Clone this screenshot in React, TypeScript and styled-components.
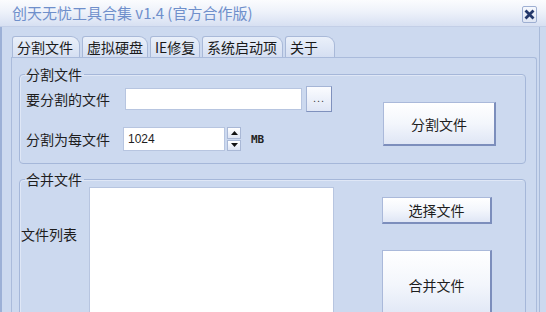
import styled, { createGlobalStyle } from "styled-components";

const GlobalStyle = createGlobalStyle`
  html, body {
    margin: 0;
    padding: 0;
    background: #ccd9ef;
    overflow: hidden;
  }
  * {
    box-sizing: border-box;
  }
`;

const cjk = `"Noto Sans CJK SC", "Noto Sans", sans-serif`;

const Window = styled.div`
  width: 546px;
  height: 312px;
  overflow: hidden;
  background: #ccd9ef;
  font-family: ${cjk};
  color: #1e1e1e;
`;

const TitleBar = styled.div`
  height: 27px;
  display: flex;
  align-items: center;
  justify-content: space-between;
  padding: 0 9px 0 12px;
  background: linear-gradient(#fbfcfe 0%, #eef2fa 45%, #d7e0f2 100%);
  border-bottom: 1px solid #c3cfe7;
`;

const Title = styled.div`
  font-size: 15px;
  line-height: 20px;
  color: #6f8fcb;
`;

const CloseButton = styled.div`
  width: 15px;
  height: 17px;
  margin-top: 2px;
  border: 1px solid #9eafd2;
  border-radius: 2px;
  background: linear-gradient(#f6f8fd, #dfe6f4);
  display: flex;
  align-items: center;
  justify-content: center;
`;

const Frame = styled.div`
  width: 540px;
  height: 285px;
  border-left: 2px solid #9cb0d6;
  border-right: 1px solid #a8bad9;
  padding: 9px 2px 0 9px;
  display: flex;
  flex-direction: column;
`;

const TabStrip = styled.div`
  display: flex;
  gap: 2px;
  height: 21px;
  padding-left: 1px;
`;

const Tab = styled.div<{ $w: number }>`
  width: ${(p) => p.$w}px;
  height: 21px;
  border: 1px solid #a9b9d8;
  border-bottom: none;
  border-radius: 3px 9px 0 0;
  background: linear-gradient(#eaf0fa, #d5dff2);
  font-size: 14px;
  line-height: 20px;
  padding-left: 4px;
  white-space: nowrap;
  color: #1a1a1a;
`;

const TabPanel = styled.div`
  flex: 1;
  border: 1px solid #aabbdb;
  border-bottom: none;
  border-radius: 0 3px 0 0;
  padding: 8px 10px 0 7px;
  display: flex;
  flex-direction: column;
  gap: 7px;
`;

const Group = styled.fieldset<{ $h: number }>`
  margin: 0;
  padding: 0;
  height: ${(p) => p.$h}px;
  flex-shrink: 0;
  border: 1px solid #a5b7d9;
  border-radius: 4px;
  box-shadow: inset 1px 1px 0 #dfe7f6;
  min-width: 0;
`;

const Legend = styled.legend`
  margin-left: 5px;
  padding: 0 2px 0 1px;
  font-size: 14px;
  line-height: 16px;
  color: #1e1e1e;
`;

const SplitBody = styled.div`
  display: flex;
  padding: 4px 0 0 6px;
`;

const Rows = styled.div`
  display: flex;
  flex-direction: column;
  gap: 14px;
`;

const Row = styled.div`
  display: flex;
  align-items: center;
  height: 26px;
`;

const Label = styled.div<{ $w?: number }>`
  width: ${(p) => p.$w ?? 99}px;
  font-size: 14px;
  line-height: 16px;
  white-space: nowrap;
`;

const TextBox = styled.div<{ $w: number; $h: number }>`
  width: ${(p) => p.$w}px;
  height: ${(p) => p.$h}px;
  background: #ffffff;
  border: 1px solid #b7c5e0;
  font-family: "Liberation Sans", Arial, sans-serif;
  font-size: 12px;
  line-height: ${(p) => p.$h - 2}px;
  padding-left: 4px;
`;

const Browse = styled.div`
  width: 26px;
  height: 26px;
  margin-left: 4px;
  border: 1px solid #a5b5d6;
  border-right-color: #7f91bd;
  border-bottom-color: #7f91bd;
  background: linear-gradient(#fbfcff, #dfe6f5);
  font-family: "Liberation Sans", Arial, sans-serif;
  font-size: 11px;
  line-height: 22px;
  text-align: center;
  color: #444;
  letter-spacing: 1px;
`;

const Spinner = styled.div`
  width: 14px;
  height: 24px;
  margin-left: 2px;
  display: flex;
  flex-direction: column;
  gap: 1px;
`;

const SpinHalf = styled.div`
  flex: 1;
  border: 1px solid #a9b8d6;
  background: linear-gradient(#ffffff, #dde4f3);
  display: flex;
  align-items: center;
  justify-content: center;
`;

const Unit = styled.div`
  margin-left: 10px;
  font-family: "DejaVu Sans Mono", monospace;
  font-weight: bold;
  font-size: 11px;
  color: #222;
`;

const Button = styled.div<{ $h: number; $w?: number; $top?: number }>`
  width: ${(p) => p.$w ?? 111}px;
  height: ${(p) => p.$h}px;
  margin-top: ${(p) => p.$top ?? 0}px;
  border: 1px solid #aab9da;
  border-right: 2px solid #7c8ebc;
  border-bottom: 2px solid #7c8ebc;
  background: linear-gradient(#ffffff 0%, #f3f6fc 50%, #dfe6f5 100%);
  display: flex;
  align-items: center;
  justify-content: center;
  font-size: 14px;
  line-height: 16px;
  color: #1e1e1e;
  flex-shrink: 0;
`;

const SplitButton = styled(Button)`
  margin-left: auto;
  margin-right: 29px;
`;

const MergeBody = styled.div`
  display: flex;
  padding-left: 1px;
  height: 100%;
`;

const ListLabel = styled(Label)`
  margin-top: 39px;
  align-self: flex-start;
`;

const ListBox = styled.div`
  width: 245px;
  height: 200px;
  background: #ffffff;
  border: 1px solid #b7c5e0;
`;

const ButtonColumn = styled.div`
  display: flex;
  flex-direction: column;
  margin-left: 48px;
`;

const Arrow = ({ up }: { up?: boolean }) => (
  <svg width="7" height="4" viewBox="0 0 7 4">
    <path d={up ? "M0 4 L3.5 0 L7 4 Z" : "M0 0 L3.5 4 L7 0 Z"} fill="#111" />
  </svg>
);

const tabs: [string, number][] = [
  ["分割文件", 68],
  ["虚拟硬盘", 66],
  ["IE修复", 50],
  ["系统启动项", 81],
  ["关于", 50],
];

export default function App() {
  return (
    <Window>
      <GlobalStyle />
      <TitleBar>
        <Title>创天无忧工具合集 v1.4 (官方合作版)</Title>
        <CloseButton>
          <svg width="11" height="11" viewBox="0 0 11 11">
            <path d="M1.5 1.5 L9.5 9.5 M9.5 1.5 L1.5 9.5" stroke="#24386a" strokeWidth="2.8" />
          </svg>
        </CloseButton>
      </TitleBar>
      <Frame>
        <TabStrip>
          {tabs.map(([t, w]) => (
            <Tab key={t} $w={w}>
              {t}
            </Tab>
          ))}
        </TabStrip>
        <TabPanel>
          <Group $h={98}>
            <Legend>分割文件</Legend>
            <SplitBody>
              <Rows>
                <Row>
                  <Label>要分割的文件</Label>
                  <TextBox $w={177} $h={22} />
                  <Browse>...</Browse>
                </Row>
                <Row>
                  <Label $w={97}>分割为每文件</Label>
                  <TextBox $w={102} $h={24}>1024</TextBox>
                  <Spinner>
                    <SpinHalf>
                      <Arrow up />
                    </SpinHalf>
                    <SpinHalf>
                      <Arrow />
                    </SpinHalf>
                  </Spinner>
                  <Unit>MB</Unit>
                </Row>
              </Rows>
              <SplitButton $h={44} $w={113} $top={16}>
                分割文件
              </SplitButton>
            </SplitBody>
          </Group>
          <Group $h={160}>
            <Legend>合并文件</Legend>
            <MergeBody>
              <ListLabel $w={68}>文件列表</ListLabel>
              <ListBox />
              <ButtonColumn>
                <Button $h={27} $w={110} $top={10}>
                  选择文件
                </Button>
                <Button $h={70} $w={110} $top={26}>
                  合并文件
                </Button>
              </ButtonColumn>
            </MergeBody>
          </Group>
        </TabPanel>
      </Frame>
    </Window>
  );
}
